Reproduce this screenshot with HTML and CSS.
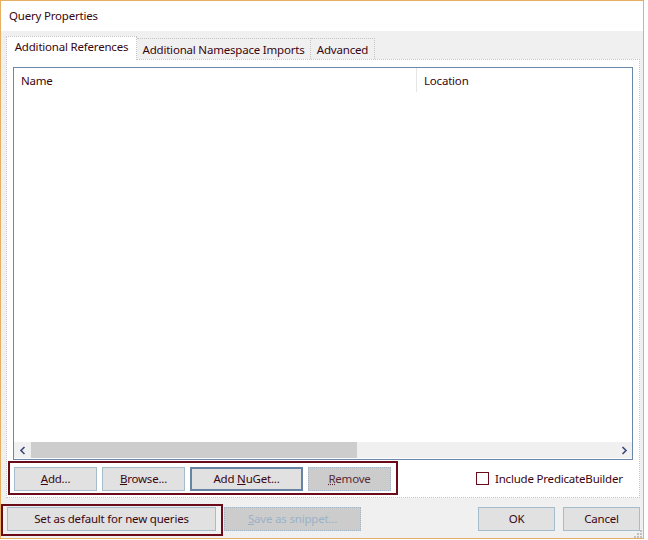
FILE: index.html
```html
<!DOCTYPE html>
<html>
<head>
<meta charset="utf-8">
<link rel="stylesheet" href="styles.css">
</head>
<body>
<div class="window">
  <div class="titlebar">Query Properties</div>
  <div class="tabs">
    <div class="tab active">Additional References</div>
    <div class="tab t2">Additional Namespace Imports</div>
    <div class="tab t3">Advanced</div>
  </div>
  <div class="panel">
    <div class="listview">
      <div class="lv-header">
        <div class="col col-name">Name</div>
        <div class="col col-loc">Location</div>
      </div>
      <div class="lv-body"></div>
      <div class="hscroll">
        <div class="arrow">
          <svg width="8" height="9" viewBox="0 0 8 9"><path d="M5.5 1 L2 4.5 L5.5 8" fill="none" stroke="#3c4878" stroke-width="1.6"/></svg>
        </div>
        <div class="track"><div class="thumb"></div></div>
        <div class="arrow">
          <svg width="8" height="9" viewBox="0 0 8 9"><path d="M2.5 1 L6 4.5 L2.5 8" fill="none" stroke="#3c4878" stroke-width="1.6"/></svg>
        </div>
      </div>
    </div>
    <div class="ref-row">
      <div class="hl-box ref-box">
        <div class="btn w83"><span><span class="u">A</span>dd...</span></div>
        <div class="btn w83"><span><span class="u">B</span>rowse...</span></div>
        <div class="btn btn-default w113"><span>Add <span class="u">N</span>uGet...</span></div>
        <div class="btn btn-dis w83 remove"><span><span class="ud">R</span>emove</span></div>
      </div>
      <label class="check">
        <span class="box"></span>
        <span>Include PredicateBuilder</span>
      </label>
    </div>
  </div>
  <div class="footer">
    <div class="hl-box def-box">
      <div class="btn w209"><span>Set as default for new queries</span></div>
    </div>
    <div class="btn btn-dis snippet"><span><span class="u">S</span>ave as snippet...</span></div>
    <div class="btn w77 ok"><span>OK</span></div>
    <div class="btn w77 cancel"><span>Cancel</span></div>
  </div>
  <svg class="grip" width="8" height="8" viewBox="0 0 8 8">
    <rect x="6" y="0" width="2" height="2" fill="#c0c0c0"/>
    <rect x="3" y="3" width="2" height="2" fill="#c0c0c0"/>
    <rect x="6" y="3" width="2" height="2" fill="#c0c0c0"/>
    <rect x="0" y="6" width="2" height="2" fill="#c0c0c0"/>
    <rect x="3" y="6" width="2" height="2" fill="#c0c0c0"/>
    <rect x="6" y="6" width="2" height="2" fill="#c0c0c0"/>
  </svg>
</div>
</body>
</html>
```
FILE: styles.css
```css
* { box-sizing: border-box; }
html, body {
  margin: 0;
  padding: 0;
  background: #ffffff;
  width: 648px;
  height: 540px;
  overflow: hidden;
}
body {
  font-family: "Noto Sans", "Open Sans", sans-serif;
  font-size: 11.5px;
  letter-spacing: -0.2px;
  color: #3a0610;
}
.window {
  position: relative;
  width: 644px;
  height: 539px;
  border: 1px solid #e6b064;
  background: #f0f0f0;
  display: flex;
  flex-direction: column;
}
.titlebar {
  height: 30px;
  background: #ffffff;
  padding-left: 8px;
  padding-bottom: 1px;
  display: flex;
  align-items: center;
  flex: none;
}
.tabs {
  height: 28px;
  padding-left: 5px;
  display: flex;
  align-items: flex-end;
  flex: none;
}
.tab {
  height: 21px;
  border: 1px dotted #c4c4c4;
  border-bottom: none;
  display: flex;
  align-items: center;
  justify-content: center;
  background: #f0f0f0;
  white-space: nowrap;
  padding-top: 1px;
}
.tab.active {
  position: relative;
  z-index: 1;
  height: 24px;
  width: 131px;
  margin-bottom: -1px;
  background: #ffffff;
  padding-top: 0;
  padding-bottom: 4px;
}
.tab.t2 { width: 174px; border-left: none; }
.tab.t3 { width: 64px; border-left: none; }
.panel {
  margin: 0 3px 0 5px;
  height: 439px;
  border: 1px dotted #c4c4c4;
  background: #ffffff;
  display: flex;
  flex-direction: column;
  flex: none;
}
.listview {
  margin: 7px 6px 0 6px;
  height: 393px;
  border: 1px solid #6b88ab;
  display: flex;
  flex-direction: column;
  flex: none;
}
.lv-header {
  height: 25px;
  display: flex;
  flex: none;
}
.col {
  display: flex;
  align-items: center;
  padding-top: 1px;
  margin-bottom: 1px;
}
.col-name {
  width: 403px;
  padding-left: 7px;
  border-right: 1px solid #e5e5e5;
}
.col-loc {
  padding-left: 7px;
}
.lv-body { flex: 1; }
.hscroll {
  height: 16px;
  margin-bottom: 1px;
  background: #f0f0f0;
  display: flex;
  align-items: stretch;
  flex: none;
}
.arrow {
  width: 17px;
  display: flex;
  align-items: center;
  justify-content: center;
  flex: none;
}
.track {
  flex: 1;
  display: flex;
}
.thumb {
  width: 326px;
  background: #cdcdcd;
}
.ref-row {
  margin-top: 1px;
  height: 34px;
  display: flex;
  align-items: center;
  flex: none;
}
.hl-box {
  border: 2px solid #6b0a18;
  display: flex;
  flex: none;
}
.ref-box {
  margin-left: 1px;
  width: 390px;
  height: 34px;
  padding: 4px 5px 2px 4px;
  gap: 5px;
  align-items: flex-start;
}
.btn {
  height: 24px;
  background: #e1e1e1;
  border: 1px solid #a4bccc;
  display: flex;
  align-items: center;
  justify-content: center;
  white-space: nowrap;
  flex: none;
  padding-bottom: 1px;
}
.w83 { width: 83px; }
.w113 { width: 113px; }
.w209 { width: 209px; }
.w77 { width: 77px; }
.btn-default { border: 2px solid #6884a4; }
.btn-dis {
  background: #cccccc;
  border: 1px dotted #9fb7c8;
}
.remove { color: #5a2a34; }
.u { text-decoration: underline; }
.ud { text-decoration: underline dotted; }
.check {
  margin-left: 78px;
  display: flex;
  align-items: center;
  gap: 6px;
}
.box {
  width: 13px;
  height: 13px;
  border: 1px solid #6b0a18;
  background: #ffffff;
}
.footer {
  margin-top: 6px;
  display: flex;
  align-items: flex-start;
  flex: none;
}
.def-box {
  width: 222px;
  height: 32px;
  padding: 1px 5px 3px 4px;
}
.snippet {
  margin-top: 3px;
  margin-left: 1px;
  width: 137px;
  color: #9ab2c8;
}
.ok {
  margin-top: 3px;
  margin-left: auto;
}
.cancel {
  margin-top: 3px;
  margin-left: 8px;
  margin-right: 3px;
}
.grip {
  position: absolute;
  right: 1px;
  bottom: 0px;
}
```
